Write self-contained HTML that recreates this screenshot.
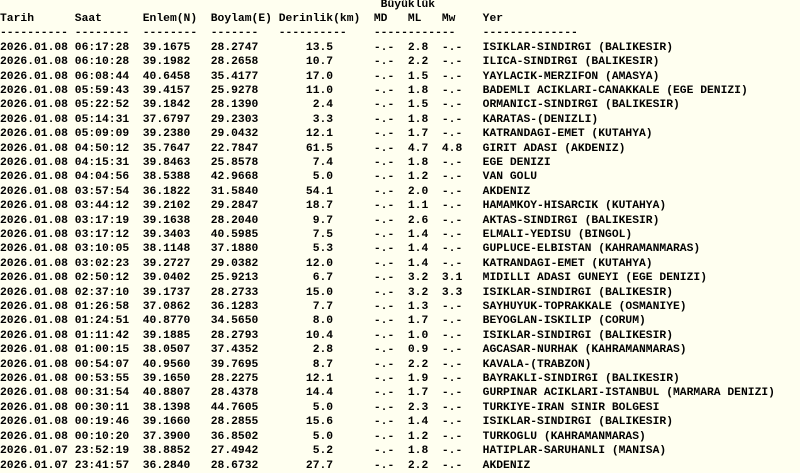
<!DOCTYPE html>
<html><head><meta charset="utf-8"><style>
html,body{margin:0;padding:0;background:#fffff0;width:800px;height:473px;overflow:hidden}
pre{margin:-2.5px 0 0 0;font-family:"Liberation Mono",monospace;font-weight:bold;font-size:11.33px;line-height:14.4px;color:#000}
</style></head><body><pre>                                                        Büyüklük
Tarih      Saat      Enlem(N)  Boylam(E) Derinlik(km)  MD   ML   Mw    Yer
---------- --------  --------  -------   ----------    ------------    --------------
2026.01.08 06:17:28  39.1675   28.2747       13.5      -.-  2.8  -.-   ISIKLAR-SINDIRGI (BALIKESIR)
2026.01.08 06:10:28  39.1982   28.2658       10.7      -.-  2.2  -.-   ILICA-SINDIRGI (BALIKESIR)
2026.01.08 06:08:44  40.6458   35.4177       17.0      -.-  1.5  -.-   YAYLACIK-MERZIFON (AMASYA)
2026.01.08 05:59:43  39.4157   25.9278       11.0      -.-  1.8  -.-   BADEMLI ACIKLARI-CANAKKALE (EGE DENIZI)
2026.01.08 05:22:52  39.1842   28.1390        2.4      -.-  1.5  -.-   ORMANICI-SINDIRGI (BALIKESIR)
2026.01.08 05:14:31  37.6797   29.2303        3.3      -.-  1.8  -.-   KARATAS-(DENIZLI)
2026.01.08 05:09:09  39.2380   29.0432       12.1      -.-  1.7  -.-   KATRANDAGI-EMET (KUTAHYA)
2026.01.08 04:50:12  35.7647   22.7847       61.5      -.-  4.7  4.8   GIRIT ADASI (AKDENIZ)
2026.01.08 04:15:31  39.8463   25.8578        7.4      -.-  1.8  -.-   EGE DENIZI
2026.01.08 04:04:56  38.5388   42.9668        5.0      -.-  1.2  -.-   VAN GOLU
2026.01.08 03:57:54  36.1822   31.5840       54.1      -.-  2.0  -.-   AKDENIZ
2026.01.08 03:44:12  39.2102   29.2847       18.7      -.-  1.1  -.-   HAMAMKOY-HISARCIK (KUTAHYA)
2026.01.08 03:17:19  39.1638   28.2040        9.7      -.-  2.6  -.-   AKTAS-SINDIRGI (BALIKESIR)
2026.01.08 03:17:12  39.3403   40.5985        7.5      -.-  1.4  -.-   ELMALI-YEDISU (BINGOL)
2026.01.08 03:10:05  38.1148   37.1880        5.3      -.-  1.4  -.-   GUPLUCE-ELBISTAN (KAHRAMANMARAS)
2026.01.08 03:02:23  39.2727   29.0382       12.0      -.-  1.4  -.-   KATRANDAGI-EMET (KUTAHYA)
2026.01.08 02:50:12  39.0402   25.9213        6.7      -.-  3.2  3.1   MIDILLI ADASI GUNEYI (EGE DENIZI)
2026.01.08 02:37:10  39.1737   28.2733       15.0      -.-  3.2  3.3   ISIKLAR-SINDIRGI (BALIKESIR)
2026.01.08 01:26:58  37.0862   36.1283        7.7      -.-  1.3  -.-   SAYHUYUK-TOPRAKKALE (OSMANIYE)
2026.01.08 01:24:51  40.8770   34.5650        8.0      -.-  1.7  -.-   BEYOGLAN-ISKILIP (CORUM)
2026.01.08 01:11:42  39.1885   28.2793       10.4      -.-  1.0  -.-   ISIKLAR-SINDIRGI (BALIKESIR)
2026.01.08 01:00:15  38.0507   37.4352        2.8      -.-  0.9  -.-   AGCASAR-NURHAK (KAHRAMANMARAS)
2026.01.08 00:54:07  40.9560   39.7695        8.7      -.-  2.2  -.-   KAVALA-(TRABZON)
2026.01.08 00:53:55  39.1650   28.2275       12.1      -.-  1.9  -.-   BAYRAKLI-SINDIRGI (BALIKESIR)
2026.01.08 00:31:54  40.8807   28.4378       14.4      -.-  1.7  -.-   GURPINAR ACIKLARI-ISTANBUL (MARMARA DENIZI)
2026.01.08 00:30:11  38.1398   44.7605        5.0      -.-  2.3  -.-   TURKIYE-IRAN SINIR BOLGESI
2026.01.08 00:19:46  39.1660   28.2855       15.6      -.-  1.4  -.-   ISIKLAR-SINDIRGI (BALIKESIR)
2026.01.08 00:10:20  37.3900   36.8502        5.0      -.-  1.2  -.-   TURKOGLU (KAHRAMANMARAS)
2026.01.07 23:52:19  38.8852   27.4942        5.2      -.-  1.8  -.-   HATIPLAR-SARUHANLI (MANISA)
2026.01.07 23:41:57  36.2840   28.6732       27.7      -.-  2.2  -.-   AKDENIZ
</pre></body></html>
